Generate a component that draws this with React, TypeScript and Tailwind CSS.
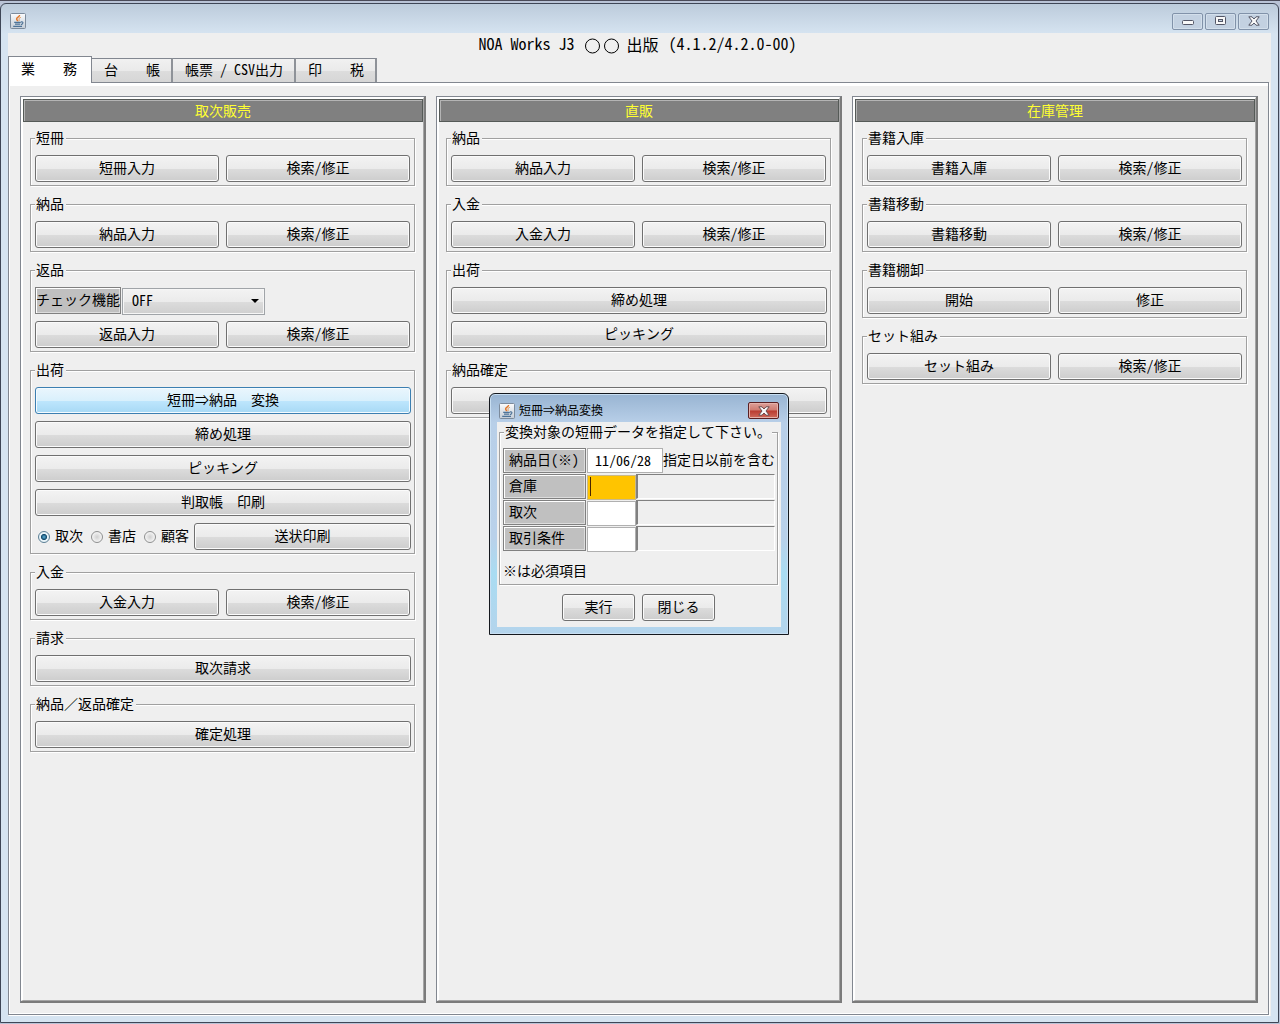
import React, { useId } from "react";

const buttonFace =
  "h-[27px] w-full rounded-[3px] border border-[#707070] bg-[linear-gradient(#f3f3f3_0%,#ebebeb_50%,#dcdcdc_51%,#cdcdcd_100%)] pb-1 text-center text-sm leading-4 text-black shadow-[inset_0_0_0_1px_#fbfbfb]";
const activeFace =
  "h-[27px] w-full rounded-[3px] border border-[#3c7fb1] bg-[linear-gradient(#eaf6fd_0%,#d9f0fc_50%,#bee6fd_51%,#a7d9f5_100%)] pb-1 text-center text-sm leading-4 text-black shadow-[inset_0_0_0_1px_#f4fbff]";
const labelFace =
  "flex items-center whitespace-nowrap border border-[#808080] bg-[#c0c0c0] pb-1 text-sm leading-4 shadow-[inset_1px_1px_0_#ffffff,inset_-1px_-1px_0_#dcdcdc]";

function JavaIcon() {
  return (
    <svg viewBox="0 0 16 16" className="size-4 shrink-0" aria-hidden="true">
      <defs>
        <linearGradient id="java-bg" x1="0" y1="0" x2="0" y2="1">
          <stop offset="0" stopColor="#fbfcfd" />
          <stop offset="1" stopColor="#c3ccd6" />
        </linearGradient>
      </defs>
      <rect x="0.5" y="0.5" width="15" height="15" rx="1" fill="url(#java-bg)" stroke="#7c8b9c" />
      <path d="M9.6 2C9.8 3.8 6.4 4.4 6.6 6C6.7 6.9 7.6 7.2 7.6 8.2" fill="none" stroke="#e0762a" strokeWidth="1.4" />
      <path d="M10.8 4.4C9 5 8.6 5.8 9.1 6.6C9.4 7.2 9.1 7.7 8.7 8.2" fill="none" stroke="#e8964e" strokeWidth="1" />
      <path d="M4.2 9.4H10.8M5 11.2H10.2M3.2 13.4H12" fill="none" stroke="#4d7398" strokeWidth="1.3" />
      <path d="M11 8.9C13.6 8.5 13.6 10.9 11 11.6" fill="none" stroke="#4d7398" strokeWidth="1.1" />
    </svg>
  );
}

function CloseGlyph({ outline }: { outline: string }) {
  return (
    <svg viewBox="0 0 12 10" className="h-[10px] w-3" aria-hidden="true">
      <path
        d="M0.8 0.8H4L6 3L8 0.8H11.2L8 5L11.2 9.2H8L6 7L4 9.2H0.8L4 5Z"
        fill="#f8f8f8"
        stroke={outline}
        strokeWidth="1"
      />
    </svg>
  );
}

function WindowButton({ label, children }: { label: string; children: React.ReactNode }) {
  return (
    <button
      type="button"
      aria-label={label}
      className="flex h-[17px] w-[31px] items-center justify-center rounded-[2px] border border-[#8192a9] bg-[#c3d1e1] shadow-[inset_0_0_0_1px_#d3dfeb]"
    >
      {children}
    </button>
  );
}

function Group({ title, children }: { title: string; children: React.ReactNode }) {
  return (
    <fieldset className="min-w-0 border border-[#a0a0a0] pb-[3px] pl-1 pr-[3px] shadow-[1px_1px_0_#ffffff,inset_1px_1px_0_#ffffff]">
      <legend className="h-4 bg-[#efefef] pl-px pr-[2px] text-sm leading-[14px]">{title}</legend>
      <div className="flex flex-col gap-[7px] pt-[9px]">{children}</div>
    </fieldset>
  );
}

function Pair({ left, right }: { left: string; right: string }) {
  return (
    <div className="grid grid-cols-2 gap-[7px] pr-px">
      <button type="button" className={buttonFace}>{left}</button>
      <button type="button" className={buttonFace}>{right}</button>
    </div>
  );
}

function Wide({ text, active, hint }: { text?: string; active?: boolean; hint?: string }) {
  return (
    <button type="button" aria-label={hint} className={active ? activeFace : buttonFace}>
      {text}
    </button>
  );
}

function Column({ title, children }: { title: string; children: React.ReactNode }) {
  return (
    <section className="flex border-b-2 border-l border-r-2 border-t border-b-[#7b7b7b] border-l-[#828790] border-r-[#7b7b7b] border-t-[#828790]">
      <div className="min-w-0 flex-1 border-b border-l-2 border-r border-t-2 border-b-[#a5a5a5] border-l-white border-r-[#a5a5a5] border-t-white">
        <h2 className="h-[23px] border border-[#555a57] bg-[#808080] text-center text-sm leading-5 text-[#ffff32] shadow-[inset_1px_1px_0_#b4b4b4]">
          {title}
        </h2>
        <div className="flex flex-col gap-[10px] pl-[7px] pr-2 pt-2">{children}</div>
      </div>
    </section>
  );
}

function Radio({ label, checked }: { label: string; checked?: boolean }) {
  return (
    <label className="flex shrink-0 items-center gap-[5px] text-sm leading-4">
      <input
        type="radio"
        name="slip"
        defaultChecked={checked}
        className="size-3 appearance-none rounded-full border border-[#8e8f8f] bg-[radial-gradient(circle,#d0d0d0_0%,#f4f4f4_70%)] checked:border-[#5b7f95] checked:bg-[radial-gradient(circle,#5fb4dc_0%,#12496b_38%,#e8f3f8_48%)]"
      />
      <span className="pb-[3px]">{label}</span>
    </label>
  );
}

function Tab({ text }: { text: string }) {
  return (
    <button
      type="button"
      role="tab"
      aria-selected="false"
      className="h-6 whitespace-pre border-r-2 border-t border-r-[#8e9298] border-t-[#828790] bg-[linear-gradient(#f1f1f1_0%,#eaeaea_50%,#dddddd_51%,#d6d6d6_100%)] pb-[3px] pl-3 pr-[11px] text-sm leading-4"
    >
      {text}
    </button>
  );
}

function CodeRow({ label, focused }: { label: string; focused?: boolean }) {
  const id = useId();
  return (
    <div className="flex h-[25px]">
      <label htmlFor={id} className={labelFace + " w-[83px] pl-[5px]"}>{label}</label>
      <div className="relative ml-px w-[49px]">
        <input
          id={id}
          type="text"
          className={
            focused
              ? "h-full w-full border border-[#c9b98a] bg-[#ffc400] text-sm leading-4"
              : "h-full w-full border border-[#b0b0b0] bg-white text-sm leading-4"
          }
        />
        {focused && <span className="pointer-events-none absolute left-[3px] top-[3px] h-[19px] w-px bg-[#4a2600]" />}
      </div>
      <input
        type="text"
        readOnly
        aria-label={label + "名"}
        className="min-w-0 flex-1 border-b border-l-2 border-r border-t border-b-white border-l-[#808080] border-r-white border-t-[#808080] bg-[#efefef]"
      />
    </div>
  );
}

function ConvertDialog() {
  return (
    <div
      role="dialog"
      aria-label="短冊⇒納品変換"
      className="absolute left-[489px] top-[392px] w-[300px] rounded-t-md border border-[#14181e] bg-[linear-gradient(#98b4d2_0%,#b8cfe8_12%,#b9d1ea_60%,#a9dcf2_75%,#b4d4ec_100%)] px-[7px] pb-[7px] shadow-[inset_0_0_0_1px_#c9dff2]"
    >
      <div className="flex h-7 items-center pl-[2px] pr-[2px] pt-[5px]">
        <JavaIcon />
        <span className="ml-1 pb-[2px] text-xs leading-4">短冊⇒納品変換</span>
        <button
          type="button"
          aria-label="閉じる"
          className="ml-auto flex h-[17px] w-[31px] items-center justify-center rounded-[2px] border border-[#5a1f22] bg-[linear-gradient(#dda099_0%,#cf7a70_48%,#b93a30_52%,#cf6a5c_100%)] shadow-[inset_0_0_0_1px_#e5b1aa]"
        >
          <CloseGlyph outline="#6a4a4c" />
        </button>
      </div>
      <form className="bg-[#efefef] pb-[6px] pl-[2px] pr-[3px] pt-[2px]" onSubmit={(e) => e.preventDefault()}>
        <fieldset className="min-w-0 border border-[#a0a0a0] pb-[5px] pl-[3px] pr-[2px] shadow-[1px_1px_0_#ffffff,inset_1px_1px_0_#ffffff]">
          <legend className="ml-px h-4 whitespace-nowrap bg-[#efefef] px-px text-sm leading-[14px]">
            変換対象の短冊データを指定して下さい。
          </legend>
          <div className="flex flex-col gap-px pt-2">
            <div className="flex h-[25px]">
              <label htmlFor="date" className={labelFace + " w-[83px] pl-[5px]"}>
                納品日(※)
              </label>
              <input
                id="date"
                type="text"
                defaultValue="11/06/28"
                className="ml-px w-[76px] border border-[#b0b0b0] bg-white pb-[2px] pl-[7px] text-sm leading-4"
              />
              <span className="self-center whitespace-nowrap pb-[3px] text-sm leading-4">指定日以前を含む</span>
            </div>
            <CodeRow label="倉庫" focused />
            <CodeRow label="取次" />
            <CodeRow label="取引条件" />
          </div>
          <p className="mt-[11px] pb-px text-sm leading-4">※は必須項目</p>
        </fieldset>
        <div className="mx-auto mt-[9px] grid w-[153px] grid-cols-2 gap-[7px]">
          <button type="submit" className={buttonFace}>実行</button>
          <button type="button" className={buttonFace}>閉じる</button>
        </div>
      </form>
    </div>
  );
}

export default function App() {
  return (
    <div className="relative flex min-h-screen flex-col border-t border-[#4a4a58] bg-[#b9c3d6] pb-px pr-px pt-[2px] font-['Noto_Sans_Mono_CJK_JP','Noto_Sans_CJK_JP',sans-serif] text-black">
      <div className="flex flex-1 flex-col rounded-t-md border border-[#3e4656] bg-[#d6e4f1] bg-[linear-gradient(#bccbdb_0px,#d6e4f1_30px)] px-[7px] pb-[6px]">
        <header className="flex h-[29px] items-center pl-[2px] pr-[2px] pt-[5px]">
          <JavaIcon />
          <div className="ml-auto flex gap-[2px]">
            <WindowButton label="最小化">
              <svg viewBox="0 0 12 10" className="h-[10px] w-3" aria-hidden="true">
                <rect x="0.5" y="4.5" width="11" height="4" rx="1" fill="#f8f8f8" stroke="#535666" />
              </svg>
            </WindowButton>
            <WindowButton label="最大化">
              <svg viewBox="0 0 12 10" className="h-[10px] w-3" aria-hidden="true">
                <rect x="0.5" y="0.5" width="10" height="8" rx="1" fill="#f8f8f8" stroke="#535666" />
                <rect x="3.5" y="3.5" width="4" height="2" fill="#c3d1e1" stroke="#535666" />
              </svg>
            </WindowButton>
            <WindowButton label="閉じる">
              <CloseGlyph outline="#535666" />
            </WindowButton>
          </div>
        </header>

        <main className="flex flex-1 flex-col bg-[#efefef] pb-px pr-[2px]">
          <h1 className="flex h-[23px] items-center justify-center gap-[10px] whitespace-nowrap pb-1 pr-[2px] text-base leading-5">
            <span>NOA Works J3</span>
            <span className="flex items-center gap-[6px] pt-[2px]">
              <svg viewBox="0 0 36 16" className="mt-1 h-4 w-9" role="img" aria-label="○○">
                <circle cx="8.5" cy="8" r="7" fill="none" stroke="#000000" />
                <circle cx="27.5" cy="8" r="7" fill="none" stroke="#000000" />
              </svg>
              出版
            </span>
            <span>(4.1.2/4.2.0-00)</span>
          </h1>

          <div role="tablist" className="flex items-end">
            <button
              type="button"
              role="tab"
              aria-selected="true"
              className="relative -mb-px h-[27px] whitespace-pre border-l border-r border-t border-[#828790] bg-white pb-[5px] pl-3 pr-[14px] text-sm leading-4"
            >
              業　　務
            </button>
            <Tab text="台　　帳" />
            <Tab text="帳票 / CSV出力" />
            <Tab text="印　　税" />
          </div>

          <div className="flex flex-1 border border-[#828790] shadow-[1px_1px_0_#ffffff]">
            <div className="grid flex-1 grid-cols-3 gap-[10px] border-b border-l border-t-[3px] border-white p-[10px]">
              <Column title="取次販売">
                <Group title="短冊">
                  <Pair left="短冊入力" right="検索/修正" />
                </Group>
                <Group title="納品">
                  <Pair left="納品入力" right="検索/修正" />
                </Group>
                <Group title="返品">
                  <div className="flex h-[27px]">
                    <label htmlFor="check" className={labelFace + " w-[86px] justify-center"}>
                      チェック機能
                    </label>
                    <div className="relative ml-px w-[143px]">
                      <select
                        id="check"
                        className="h-full w-full appearance-none border border-[#a0a4a8] bg-[linear-gradient(#f3f3f3_0%,#ebebeb_50%,#dcdcdc_51%,#cfcfcf_100%)] pb-[3px] pl-[9px] text-sm leading-4 shadow-[inset_0_0_0_1px_#f6f6f6]"
                      >
                        <option>OFF</option>
                      </select>
                      <svg viewBox="0 0 8 4" className="pointer-events-none absolute right-[6px] top-3 h-1 w-2" aria-hidden="true">
                        <path d="M0 0H8L4 4Z" fill="#000000" />
                      </svg>
                    </div>
                  </div>
                  <Pair left="返品入力" right="検索/修正" />
                </Group>
                <Group title="出荷">
                  <Wide text="短冊⇒納品　変換" active />
                  <Wide text="締め処理" />
                  <Wide text="ピッキング" />
                  <Wide text="判取帳　印刷" />
                  <div className="flex items-center gap-2 pl-[3px]">
                    <Radio label="取次" checked />
                    <Radio label="書店" />
                    <div className="flex flex-1 items-center gap-[5px]">
                      <Radio label="顧客" />
                      <Wide text="送状印刷" />
                    </div>
                  </div>
                </Group>
                <Group title="入金">
                  <Pair left="入金入力" right="検索/修正" />
                </Group>
                <Group title="請求">
                  <Wide text="取次請求" />
                </Group>
                <Group title="納品／返品確定">
                  <Wide text="確定処理" />
                </Group>
              </Column>

              <Column title="直販">
                <Group title="納品">
                  <Pair left="納品入力" right="検索/修正" />
                </Group>
                <Group title="入金">
                  <Pair left="入金入力" right="検索/修正" />
                </Group>
                <Group title="出荷">
                  <Wide text="締め処理" />
                  <Wide text="ピッキング" />
                </Group>
                <Group title="納品確定">
                  <Wide hint="納品確定" />
                </Group>
              </Column>

              <Column title="在庫管理">
                <Group title="書籍入庫">
                  <Pair left="書籍入庫" right="検索/修正" />
                </Group>
                <Group title="書籍移動">
                  <Pair left="書籍移動" right="検索/修正" />
                </Group>
                <Group title="書籍棚卸">
                  <Pair left="開始" right="修正" />
                </Group>
                <Group title="セット組み">
                  <Pair left="セット組み" right="検索/修正" />
                </Group>
              </Column>
            </div>
          </div>
        </main>
      </div>
      <ConvertDialog />
    </div>
  );
}
